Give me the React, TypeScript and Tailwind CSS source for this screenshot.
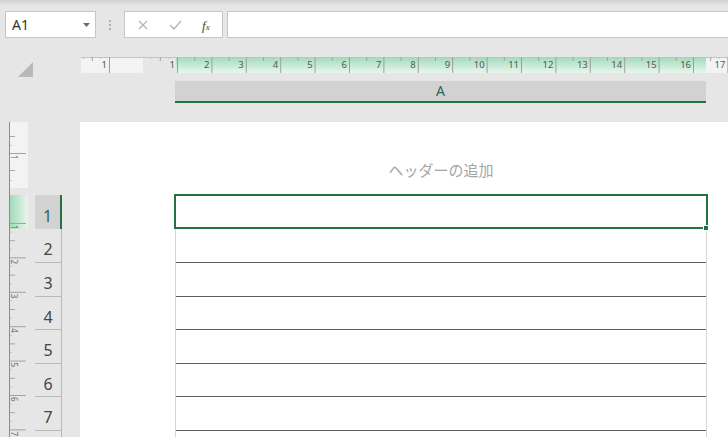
import React from 'react';

const rowHeights = [34, 34, 34, 33, 34, 33, 34, 34];
const UNIT = 34.4;

function HRuler() {
    // local x = page x - 81
    const ox = 81;
    const starts = Array.from({ length: 17 }, (_, k) => 177 + UNIT * k);
    const longTicks = [109, ...starts];
    const labels = [{ x: 109, t: '1' }, ...starts.map((x, k) => ({ x, t: String(k + 1) }))];
    const mids: number[] = [];
    const quarters: number[] = [];
    [109, ...starts].forEach((x) => {
        mids.push(x - UNIT / 2);
        quarters.push(x - UNIT / 4, x - (UNIT * 3) / 4);
    });
    return (
        <svg width={647} height={16} viewBox="0 0 647 16" className="block shrink-0">
            <defs>
                <linearGradient id="hg" x1="0" y1="0" x2="0" y2="1">
                    <stop offset="0" stopColor="#a1dab9" />
                    <stop offset="1" stopColor="#e9f6ee" />
                </linearGradient>
            </defs>
            <rect x={0} y={0} width={62} height={16} fill="#f3f3f3" />
            <rect x={95} y={0} width={530} height={16} fill="url(#hg)" />
            <rect x={625} y={0} width={22} height={16} fill="#f3f3f3" />
            <line x1={0} y1={0.5} x2={647} y2={0.5} stroke="#c4c4c4" />
            {longTicks.map((x) => (
                <line key={'l' + x} x1={x - ox + 0.5} y1={0} x2={x - ox + 0.5} y2={16} stroke="#9e9e9e" />
            ))}
            {mids.map((x) => (
                <line key={'m' + x} x1={x - ox + 0.5} y1={0} x2={x - ox + 0.5} y2={4} stroke="#a4a4a4" />
            ))}
            {quarters.map((x) => (
                <line key={'q' + x} x1={x - ox + 0.5} y1={0} x2={x - ox + 0.5} y2={2} stroke="#c2c2c2" />
            ))}
            {labels.map((l) => (
                <text
                    key={'t' + l.x}
                    x={l.x - ox - 2}
                    y={11}
                    textAnchor="end"
                    fontSize={9.5}
                    fill="#555"
                    fontFamily="'Noto Sans', sans-serif"
                >
                    {l.t}
                </text>
            ))}
        </svg>
    );
}

function VRuler() {
    // local y = page y - 122
    const oy = 122;
    const seq = [223, 223 + UNIT, 223 + UNIT * 2, 223 + UNIT * 3, 223 + UNIT * 4, 223 + UNIT * 5, 223 + UNIT * 6];
    const longTicks = [153, ...seq];
    const labels = [{ y: 153, t: '1' }, ...seq.map((y, k) => ({ y, t: String(k + 1) }))];
    const mids = [136, 170, ...seq.map((y) => y + UNIT / 2)];
    const quarters = [145, 180, ...seq.flatMap((y) => [y + UNIT / 4, y + (UNIT * 3) / 4])];
    return (
        <svg width={19} height={315} viewBox="0 0 19 315" className="block shrink-0">
            <defs>
                <linearGradient id="vg" x1="0" y1="0" x2="1" y2="0">
                    <stop offset="0" stopColor="#a1dab9" />
                    <stop offset="1" stopColor="#e9f6ee" />
                </linearGradient>
            </defs>
            <rect x={1} y={0} width={18} height={66} fill="#f3f3f3" />
            <rect x={1} y={73} width={18} height={34} fill="url(#vg)" />
            <line x1={0.5} y1={0} x2={0.5} y2={315} stroke="#8c8c8c" />
            {longTicks.map((y) => (
                <line key={'l' + y} x1={1} y1={y - oy + 0.5} x2={17} y2={y - oy + 0.5} stroke="#a2a2a2" />
            ))}
            {mids.map((y) => (
                <line key={'m' + y} x1={1} y1={y - oy + 0.5} x2={6} y2={y - oy + 0.5} stroke="#a8a8a8" />
            ))}
            {quarters.map((y) => (
                <line key={'q' + y} x1={1} y1={y - oy + 0.5} x2={3} y2={y - oy + 0.5} stroke="#c4c4c4" />
            ))}
            {labels.map((l) => (
                <text
                    key={'t' + l.y}
                    transform={`translate(1.5, ${l.y - oy + 2}) rotate(90)`}
                    fontSize={8}
                    fill="#666"
                    fontFamily="'Noto Sans', sans-serif"
                >
                    {l.t}
                </text>
            ))}
        </svg>
    );
}

export default function App() {
    return (
        <div className="w-[728px] h-[437px] overflow-hidden bg-[#e6e6e6] flex flex-col font-['Noto_Sans','Noto_Sans_CJK_JP',sans-serif]">
            {/* top strip */}
            <div className="shrink-0 h-[5px] bg-linear-to-b from-[#d0d0d0] to-[#e6e6e6]" />

            {/* formula bar */}
            <div className="shrink-0 mt-[6px] h-[27px] flex">
                <div className="ml-[5px] w-[91px] bg-white border border-[#c6c6c6] flex items-center justify-between pl-[6px] pr-[5px]">
                    <span className="text-[14px] text-[#333] leading-none">A1</span>
                    <svg width="7" height="4" viewBox="0 0 7 4">
                        <polygon points="0,0 7,0 3.5,4" fill="#6b6b6b" />
                    </svg>
                </div>
                <div className="w-[28px] flex flex-col items-center justify-center gap-[2px]">
                    <span className="w-[2px] h-[2px] bg-[#b0b0b0]" />
                    <span className="w-[2px] h-[2px] bg-[#b0b0b0]" />
                    <span className="w-[2px] h-[2px] bg-[#b0b0b0]" />
                </div>
                <div className="w-[99px] bg-white border border-[#c6c6c6] flex items-center">
                    <svg width="10" height="10" viewBox="0 0 10 10" className="ml-[13px]">
                        <path d="M1 1 L9 9 M9 1 L1 9" stroke="#b3b3b3" strokeWidth="1.2" />
                    </svg>
                    <svg width="13" height="10" viewBox="0 0 13 10" className="ml-[21px]">
                        <path d="M1 5 L5 9 L12 1" stroke="#b3b3b3" strokeWidth="1.3" fill="none" />
                    </svg>
                    <span className="ml-[20px] font-['Liberation_Serif',serif] italic text-[#444] leading-none">
                        <span className="text-[13px]">f</span>
                        <span className="text-[9px]">x</span>
                    </span>
                </div>
                <div className="ml-[4px] flex-1 bg-white border border-r-0 border-[#c6c6c6]" />
            </div>

            {/* ruler + column header */}
            <div className="shrink-0 mt-[19px] h-[46px] flex">
                <div className="w-[81px] pt-[5px] pl-[18px]">
                    <svg width="15" height="15" viewBox="0 0 15 15">
                        <polygon points="15,0 15,15 0,15" fill="#b9b9b9" />
                    </svg>
                </div>
                <div className="flex flex-col">
                    <HRuler />
                    <div className="shrink-0 mt-[8px] ml-[94px] w-[531px] h-[22px] bg-[#d2d2d2] border-b-2 border-[#217346] flex items-center justify-center">
                        <span className="text-[14px] text-[#2f6650] leading-none">A</span>
                    </div>
                </div>
            </div>

            {/* body */}
            <div className="shrink-0 mt-[19px] h-[315px] overflow-hidden flex">
                <div className="w-[9px] shrink-0" />
                <VRuler />
                <div className="w-[7px] shrink-0" />
                <div className="w-[27px] shrink-0 flex flex-col pt-[73px]">
                    {rowHeights.map((h, i) => (
                        <div
                            key={i}
                            style={{ height: h }}
                            className={
                                i === 0
                                    ? 'shrink-0 pt-[7px] bg-[#d2d2d2] border-r-2 border-[#217346] flex items-center justify-center text-[16px] text-[#2f6650]'
                                    : 'shrink-0 pt-[7px] border-b border-r border-[#b8b8b8] flex items-center justify-center text-[16px] text-[#444]'
                            }
                        >
                            {i < 7 ? i + 1 : ''}
                        </div>
                    ))}
                </div>
                <div className="w-[18px] shrink-0" />
                <div className="flex-1 bg-white flex flex-col">
                    <div className="shrink-0 ml-[95px] w-[532px] pt-[38px] text-center text-[15px] leading-[20px] text-[#a6a6a6]">
                        ヘッダーの追加
                    </div>
                    <div className="shrink-0 ml-[95px] w-[532px] mt-[15px] border-l border-r border-[#d4d4d4] flex flex-col">
                        {rowHeights.map((h, i) => (
                            <div
                                key={i}
                                style={{ height: h }}
                                className="shrink-0 relative border-b border-[#5e5e5e]"
                            >
                                {i === 0 && (
                                    <div className="absolute -left-[2px] -top-[1px] w-[534px] h-[35px] border-2 border-[#217346]">
                                        <div className="absolute -right-[3px] -bottom-[4px] w-[6px] h-[6px] bg-[#217346] border border-white" />
                                    </div>
                                )}
                            </div>
                        ))}
                    </div>
                </div>
            </div>
        </div>
    );
}
